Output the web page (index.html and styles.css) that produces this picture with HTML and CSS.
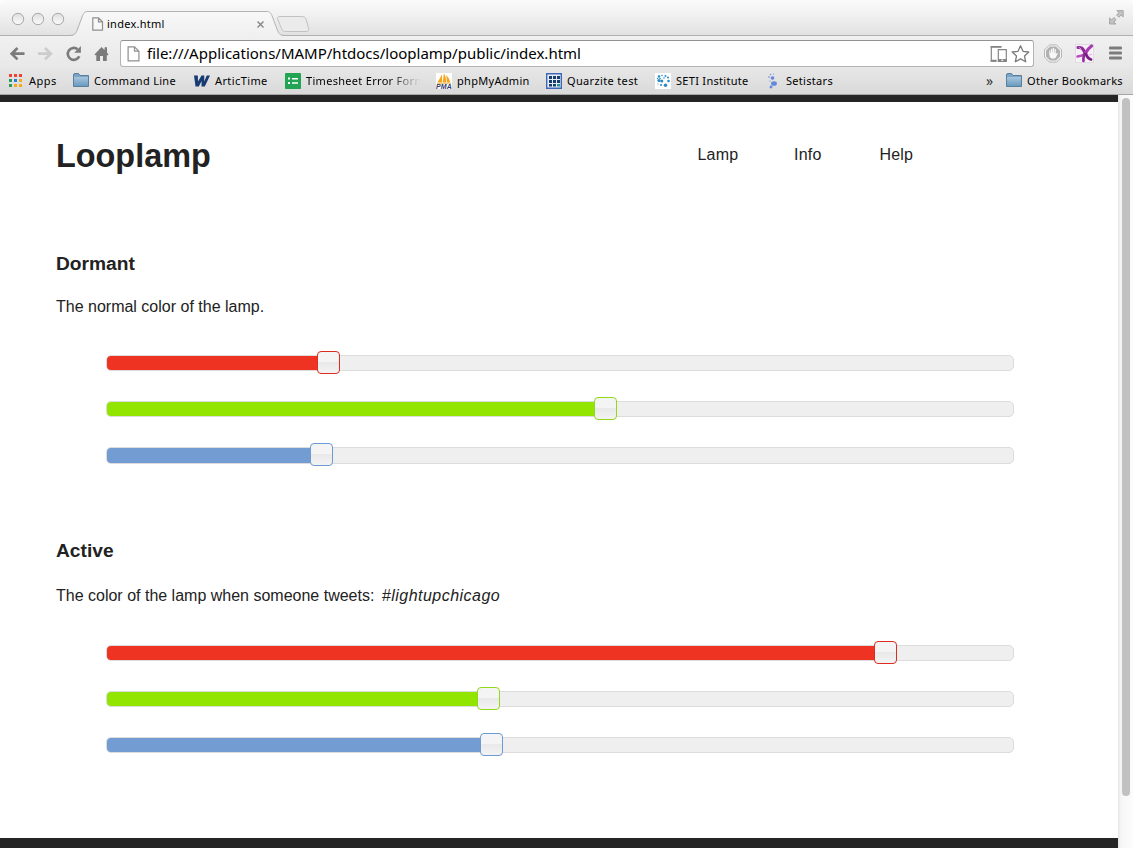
FILE: index.html
```
<!DOCTYPE html>
<html lang="en">
<head>
<meta charset="utf-8">
<title>index.html</title>
<link rel="stylesheet" href="styles.css">
</head>
<body>
<div class="window">
  <header class="tabstrip">
    <svg class="tabs-shape" width="320" height="36" viewBox="0 0 320 36">
      <defs>
        <linearGradient id="tabFill" x1="0" y1="0" x2="0" y2="1"><stop offset="0" stop-color="#f8f8f8"/><stop offset="1" stop-color="#f0f0f0"/></linearGradient>
        <linearGradient id="lightFill" x1="0" y1="0" x2="0" y2="1"><stop offset="0" stop-color="#dedede"/><stop offset="1" stop-color="#fbfbfb"/></linearGradient>
      </defs>
      <path d="M70 36C76 35.500 77 33 78.500 29L83 17C84.500 13 85 11.500 88 11.500H266C270 11.500 271 13 272.500 17L277 29C278.500 33 279 35.500 285 36Z" fill="url(#tabFill)"/>
      <path d="M68 35.500C75 35.500 76 33 77.500 29L82 17C83.500 13 84.500 11.500 88 11.500H266C270 11.500 271 13 272.500 17L277 29C278.500 33 279 35.500 286 35.500" fill="none" stroke="#b3b3b3"/>
      <path d="M280 16.500H301C304 16.500 305.200 17.200 306 19L308.500 28C309.100 30.500 308.500 31.500 306 31.500H286C283.500 31.500 282.500 31 281.500 28.500L278 20C277 17.500 277.500 16.500 280 16.500Z" fill="#ebebeb" stroke="#c2c2c2"/>
      <g fill="url(#lightFill)" stroke="#a9a9a9"><circle cx="18" cy="19" r="5.700"/><circle cx="38" cy="19" r="5.700"/><circle cx="58" cy="19" r="5.700"/></g>
    </svg>
    <div class="tab">
      <svg width="12" height="14" viewBox="0 0 12 14"><path d="M.8.800H6.500L10.500 4.800V13.200H.8ZM6.500.800V4.800H10.500" fill="#f7f7f7" stroke="#909090" stroke-width="1.200"/></svg>
      <span class="tab-title">index.html</span>
      <svg class="tab-close" width="7" height="7" viewBox="0 0 7 7"><path d="M.5.500 6.500 6.500M6.500.500.500 6.500" stroke="#858585" stroke-width="1.400"/></svg>
    </div>
    <svg class="expand" width="15" height="15" viewBox="0 0 15 15"><g fill="#c3c3c3" stroke="#999" stroke-width=".8"><path d="M7.900.600H14.200V6.900L12.200 5 9.800 7.300 7.600 5.100 9.900 2.700Z"/><path d="M.6 7.900 2.600 9.800 4.900 7.500 7.100 9.700 4.900 12.100 6.900 14H.6Z"/></g></svg>
  </header>

  <div class="toolbar">
    <svg class="nav-icons" width="104" height="20" viewBox="0 0 104 20">
      <path d="M18.500 9.700H6M11.500 4 5.700 9.700 11.500 15.400" fill="none" stroke="#7b7b7b" stroke-width="2.700"/>
      <path d="M32 9.700H44.500M39 4 44.800 9.700 39 15.400" fill="none" stroke="#cccccc" stroke-width="2.700"/>
      <path d="M73.300 12.300A6 6 0 1 1 71.600 5.200" fill="none" stroke="#7b7b7b" stroke-width="2.600"/>
      <path d="M74.900 2V8.700H68.200Z" fill="#7b7b7b"/>
      <path d="M88.500 10.400 95.500 3 98.600 6.100V3.300H101V8.500L102.500 10.400 101.600 11.200H100.800V17H97V12H94V17H90.300V11.200H89.400Z" fill="#7b7b7b"/>
    </svg>
    <div class="omnibox">
      <svg width="13" height="16" viewBox="0 0 13 16"><path d="M1.100.800H7.500L11.900 5.200V14.800H1.100ZM7.500.800V5.200H11.900" fill="#fff" stroke="#8f8f8f" stroke-width="1.200"/></svg>
      <span class="url">file:///Applications/MAMP/htdocs/looplamp/public/index.html</span>
      <svg class="omni-actions" width="42" height="20" viewBox="0 0 42 20">
        <path d="M11.300 2.700H1.300V17.200H6.500" fill="none" stroke="#858585" stroke-width="1.200"/>
        <path d="M.7 2.100H11.500V3.800H.7ZM.7 15.800H6.500V17.800H.7Z" fill="#858585"/>
        <path d="M8.300 5.600H16.300V17.300H8.300Z" fill="#fff" stroke="#858585" stroke-width="1.200"/>
        <path d="M8 15H16.500V17.600H8Z" fill="#858585"/><path d="M11.300 15.600H13.300V16.800H11.300Z" fill="#fff"/>
        <path d="M30.500 1.800 33 7.300 38.800 8 34.500 12 35.700 17.800 30.500 14.900 25.300 17.800 26.500 12 22.200 8 28 7.300Z" fill="#fff" stroke="#7b7b7b" stroke-width="1.300" stroke-linejoin="round"/>
      </svg>
    </div>
    <svg class="extensions" width="84" height="20" viewBox="0 0 84 20">
      <path d="M6.500.900H13.500L18.500 5.900V13.100L13.500 18.100H6.500L1.500 13.100V5.900Z" fill="#f4f4f4" stroke="#b5b5b5"/>
      <path d="M7 2.400H13L17 6.400V12.600L13 16.600H7L3 12.600V6.400Z" fill="#b1b1b1"/>
      <path d="M6.300 10V6.500H7.500V9H8V4.700H9.300V8.500H9.800V4H11.100V8.500H11.600V5H12.800V10.300L14 9H15L12.800 13.500 11.500 14.500H8.500L6.800 13Z" fill="#f8f8f8"/>
      <path d="M32.500 .500H50.500V18.500H32.500Z" fill="#f6f0f7" stroke="#e2d9e5"/>
      <g fill="none" stroke-linecap="round"><path d="M35 3.500Q39 3 40.500 6T42.500 10" stroke="#8a2a96" stroke-width="3"/><path d="M48.500 2Q44.500 5 42.500 9" stroke="#a83ab2" stroke-width="3.200"/><path d="M42 10Q39 12 34.500 12.500" stroke="#b64cc0" stroke-width="2.600"/><path d="M41.500 10Q40 14 40.500 17" stroke="#8a2a96" stroke-width="2.600"/><path d="M43 10Q44.500 14.500 48 15.500" stroke="#7a2283" stroke-width="2.800"/><path d="M46 11 48.500 10.500M36 3.500 38 5" stroke="#e9a6ea"/></g>
      <g fill="#7c7c7c"><rect x="66" y="2.500" width="13" height="3" rx="1"/><rect x="66" y="7.500" width="13" height="3" rx="1"/><rect x="66" y="12.500" width="13" height="3" rx="1"/></g>
    </svg>
  </div>

  <nav class="bookmarks">
    <a class="bm bm-apps"><svg width="16" height="16" viewBox="0 0 16 16"><g><path d="M1 1H4V4H1ZM6 1H9V4H6ZM11 1H14V4H11Z" fill="#ef4136"/><path d="M1 6H4V9H1ZM1 11H4V14H1Z" fill="#299b5b"/><path d="M6 6H9V9H6Z" fill="#2482df"/><path d="M11 6H14V9H11ZM6 11H9V14H6ZM11 11H14V14H11Z" fill="#f5ab18"/></g></svg><span>Apps</span></a>
    <a class="bm bm-command"><svg width="16" height="16" viewBox="0 0 16 16"><defs><linearGradient id="folder" x1="0" y1="0" x2="0" y2="1"><stop offset="0" stop-color="#a6c6df"/><stop offset="1" stop-color="#6b9abd"/></linearGradient></defs><path d="M.5 13.500V2Q.5.500 2 .500H5.500L7 2.500H15.500V13.500Z" fill="#7aa5c5" stroke="#587f9d"/><path d="M1 4H15V13H1Z" fill="url(#folder)"/></svg><span>Command Line</span></a>
    <a class="bm bm-artic"><svg width="17" height="16" viewBox="0 0 17 16"><path d="M1 2.500H4.800L5 8.500 8.500 2.500H11.300L11.200 8.500 13.800 2.500H17L11.800 13.500H8.500L8.600 8 5.800 13.500H2.500Z" fill="#173b73"/></svg><span>ArticTime</span></a>
    <a class="bm bm-timesheet"><svg width="16" height="16" viewBox="0 0 16 16"><rect width="16" height="16" rx=".8" fill="#23a455"/><path d="M3 4.500H5V6.500H3ZM7 5H13V6.500H7ZM3 9H5V11H3ZM7 9.300H13V10.800H7Z" fill="#fff"/></svg><span class="fade">Timesheet Error Form</span></a>
    <a class="bm bm-pma"><svg width="16" height="16" viewBox="0 0 16 16"><path d="M0 0H16V16H0Z" fill="#fff"/><path d="M1.500 9.500 6 1.500 6.200 9.500ZM6.800 9.500 7.800.500Q10 3 10.300 9.500ZM11 9.500 10.200 2Q13.500 5 14.500 9.500Z" fill="#f5a51c"/><path d="M1 10.300H15" stroke="#e5b867"/><text x="0" y="15.800" class="pma-logo" textLength="16">PMA</text></svg><span>phpMyAdmin</span></a>
    <a class="bm bm-quarzite"><svg width="16" height="16" viewBox="0 0 16 16"><path d="M.7.700H15.300V15.300H.7Z" fill="#e9edf4" stroke="#3e68b7" stroke-width="1.400"/><path d="M3 3H6V6H3ZM7 3H10V6H7ZM11 3H14V6H11ZM3 7H6V10H3ZM7 7H10V10H7ZM11 7H14V10H11ZM3 11H6V13.500H3ZM7 11H10V13.500H7Z" fill="#153d70"/><path d="M11 11H14V13.500H11Z" fill="#259494"/></svg><span>Quarzite test</span></a>
    <a class="bm bm-seti"><svg width="16" height="16" viewBox="0 0 16 16"><path d="M0 0H16V16H0Z" fill="#fff"/><g fill="#2789c2"><circle cx="4" cy="3.500" r="1.300"/><circle cx="7" cy="2.500" r=".8"/><circle cx="10.500" cy="3" r="1"/><circle cx="13" cy="4.500" r="1"/><circle cx="4" cy="7.500" r="1.600"/><circle cx="6.800" cy="8" r="1.500"/><circle cx="13.500" cy="8" r="1.300"/><circle cx="6" cy="12" r="1"/><circle cx="10.500" cy="12.300" r="1.700"/><circle cx="2.500" cy="5.500" r=".7"/><circle cx="9" cy="5" r=".8"/><circle cx="3" cy="11" r=".6"/><circle cx="5" cy="5.500" r=".8"/></g></svg><span>SETI Institute</span></a>
    <a class="bm bm-stars"><svg width="16" height="16" viewBox="0 0 16 16"><g fill="#6287dc"><circle cx="7.500" cy="5" r="1.800"/><ellipse cx="9" cy="10.500" rx="2.900" ry="2.300"/><circle cx="6" cy="14" r="1.400"/><circle cx="4" cy="4" r=".8"/><circle cx="5.500" cy="1.500" r=".7"/><circle cx="5" cy="8" r=".6"/><circle cx="8.500" cy="1" r=".5"/></g></svg><span>Setistars</span></a>
    <span class="more">»</span>
    <a class="bm bm-other"><svg width="16" height="16" viewBox="0 0 16 16"><path d="M.5 13.500V2Q.5.500 2 .500H5.500L7 2.500H15.500V13.500Z" fill="#7aa5c5" stroke="#587f9d"/><path d="M1 4H15V13H1Z" fill="url(#folder)"/></svg><span>Other Bookmarks</span></a>
  </nav>

  <div class="viewport">
    <main class="page">
      <header class="masthead">
        <h1>Looplamp</h1>
        <ul class="menu"><li class="m-lamp">Lamp</li><li class="m-info">Info</li><li>Help</li></ul>
      </header>
      <section class="group dormant">
        <h2>Dormant</h2>
        <p>The normal color of the lamp.</p>
        <div class="sliders">
          <div class="slider red"><div class="fill" style="width:210px"></div><div class="handle"></div></div>
          <div class="slider green"><div class="fill" style="width:487px"></div><div class="handle"></div></div>
          <div class="slider blue"><div class="fill" style="width:203px"></div><div class="handle"></div></div>
        </div>
      </section>
      <section class="group active">
        <h2>Active</h2>
        <p>The color of the lamp when someone tweets: <em>#lightupchicago</em></p>
        <div class="sliders">
          <div class="slider red"><div class="fill" style="width:767px"></div><div class="handle"></div></div>
          <div class="slider green"><div class="fill" style="width:370px"></div><div class="handle"></div></div>
          <div class="slider blue"><div class="fill" style="width:373px"></div><div class="handle"></div></div>
        </div>
      </section>
    </main>
    <div class="scrollbar"><div class="thumb"></div></div>
  </div>
</div>
</body>
</html>
```
FILE: styles.css
```
* { box-sizing: border-box; }
body { margin: 0; background: #fff; font-family: "Noto Sans", sans-serif; color: #000; }
svg { display: block; flex: none; }
.window { width: 1133px; height: 848px; overflow: hidden; display: flex; flex-direction: column; }

.tabstrip { position: relative; height: 36px; flex: none; display: flex; justify-content: space-between; background: linear-gradient(#fbfbfb, #e2e2e2); border-bottom: 1px solid #b0b0b0; border-radius: 4px 4px 0 0; }
.tabs-shape { position: absolute; left: 0; top: 0; }
.tab { position: relative; display: flex; align-items: center; width: 182px; height: 24px; margin: 12px 0 0 92px; }
.tab-title { margin-left: 3px; font-size: 11px; letter-spacing: .25px; line-height: 24px; }
.tab-close { margin-left: auto; margin-right: 10px; }
.expand { margin: 10px 9px 0 0; }

.toolbar { flex: none; height: 32px; padding-top: 4px; display: flex; background: linear-gradient(#f0f0f0, #e8e8e8); }
.nav-icons { margin: 4px 10px 0 6px; overflow: visible; }
.omnibox { width: 914px; height: 27px; display: flex; align-items: center; padding: 0 4px 0 6px; background: #fff; border: 1px solid #b3b3b3; border-top-color: #929292; border-radius: 3px; }
.url { margin-left: 7px; margin-top: -2px; font-size: 15px; line-height: 24px; white-space: nowrap; }
.omni-actions { margin-left: auto; margin-right: -3px; }
.extensions { margin: 4px 0 0 9px; }

.bookmarks { flex: none; height: 27px; padding: 0 0 1px 8px; display: flex; align-items: center; background: linear-gradient(#e7e7e7, #d9d9d9); border-bottom: 1px solid #a6a6a6; font-size: 11px; }
.bm { display: flex; align-items: center; flex: none; white-space: nowrap; letter-spacing: .3px; }
.bm span { margin-left: 5px; }
.bm-apps { width: 65px; letter-spacing: .45px; }
.bm-command { width: 120px; }
.bm-artic { width: 92px; letter-spacing: .4px; }
.bm-timesheet { width: 151px; }
.bm-pma { width: 110px; }
.bm-quarzite { width: 109px; letter-spacing: .35px; }
.bm-seti { width: 110px; }
.fade { width: 118px; margin-right: -4px; -webkit-mask-image: linear-gradient(90deg, #000 70%, transparent 97%); mask-image: linear-gradient(90deg, #000 70%, transparent 97%); }
.pma-logo { font: italic bold 7px "Liberation Sans", sans-serif; fill: #33396d; }
.more { margin-left: auto; width: 20px; font-size: 14px; line-height: 20px; color: #333; }
.bm-other { width: 127px; }

.viewport { flex: 1; display: flex; }
.page { width: 1118px; padding: 0 56px; background: #fff; border-top: 7px solid #252525; border-bottom: 10px solid #252525; font-family: "Liberation Sans", Arial, sans-serif; font-size: 16px; color: #222; }
h1, h2, p, ul { margin: 0; padding: 0; }
.masthead { display: flex; height: 149px; }
h1 { width: 641.5px; padding-top: 34px; font-size: 32.4px; line-height: 40px; }
.menu { display: flex; list-style: none; padding-top: 43px; line-height: 20px; letter-spacing: .2px; }
.m-lamp { width: 96.5px; }
.m-info { width: 85.5px; }
.group { height: 287px; }
h2 { font-size: 19.2px; line-height: 26px; }
.dormant p { padding-top: 20px; line-height: 20px; }
.active p { padding-top: 22px; line-height: 20px; }
em { margin-left: 3px; letter-spacing: .48px; }
.sliders { display: flex; flex-direction: column; gap: 30px; padding: 38px 0 0 50px; }
.active .sliders { padding-top: 39px; }
.slider { width: 908px; height: 16px; display: flex; align-items: center; background: #efefef; border: 1px solid #dcdcdc; border-radius: 5px; }
.dormant .blue { height: 17px; }
.fill { height: 100%; border-radius: 4px 0 0 4px; }
.handle { width: 23px; height: 23px; flex: none; margin-bottom: 1px; border: 1px solid; border-radius: 4px; background: linear-gradient(#f4f4f4 0 48%, #e9e9e9 50%, #f3f3f3); }
.dormant .blue .handle { margin-bottom: 2px; }
.red .fill { background: #ee3322; }
.green .fill { background: #91e500; }
.blue .fill { background: #739dd2; }
.red .handle { border-color: #dc2d20; }
.green .handle { border-color: #91d91a; }
.blue .handle { border-color: #6c9bd2; }

.scrollbar { width: 15px; padding: 3px 3px 0 4px; background: linear-gradient(90deg, #e5e5e5, #f6f6f6 20%, #fcfcfc); }
.thumb { width: 8px; height: 698px; border-radius: 4px; background: #c1c1c1; }
```
